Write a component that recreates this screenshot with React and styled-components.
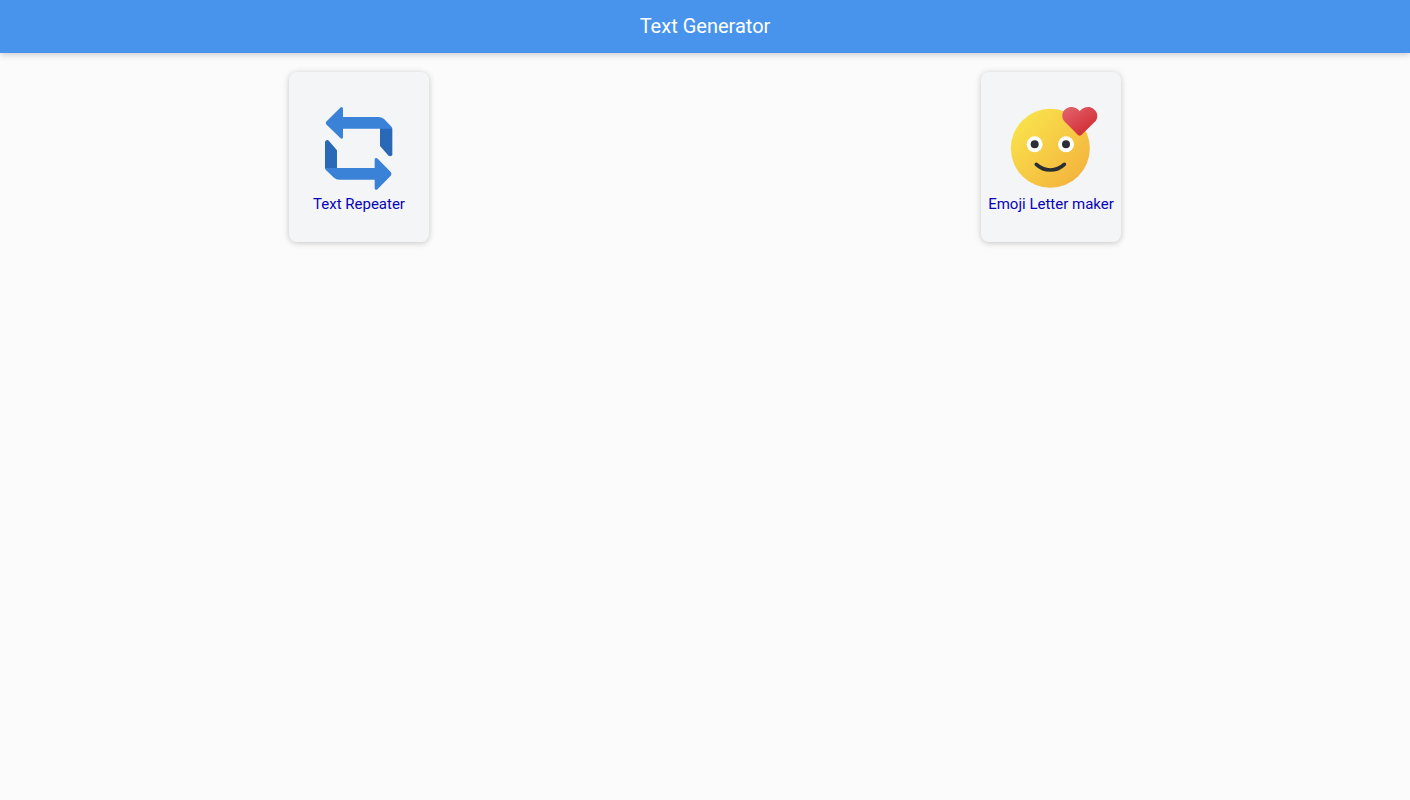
import styled, { createGlobalStyle } from "styled-components";

const GlobalStyle = createGlobalStyle`
  body {
    margin: 0;
    background-color: #fbfbfb;
    font-family: Roboto, sans-serif;
  }
`
const Header = styled.header`
  display: flex;
  justify-content: center;
  height: 53px;
  background-color: #4894ed;
  box-shadow: 0 2px 6px rgba(0, 0, 0, 0.18);
  &>h1{
    margin: 0;
    font-size: 20px;
    font-weight: 400;
    line-height: 52px;
    color: #ffffff;
  }
`
const ToolList = styled.main`
  display: flex;
  justify-content: space-around;
  padding: 19px 13px;
`
const ToolCard = styled.a`
  display: flex;
  flex-direction: column;
  align-items: center;
  justify-content: center;
  box-sizing: border-box;
  width: 140px;
  height: 170px;
  padding-bottom: 2px;
  border-radius: 8px;
  background-color: #f3f5f7;
  box-shadow: 0 1px 6px rgba(0, 0, 0, 0.22);
  text-decoration: none;
  &>svg{
    width: 96px;
    height: 96px;
  }
  &>span{
    font-size: 15px;
    line-height: 16px;
    white-space: nowrap;
    color: #0803b8;
  }
`
const RepeatIcon = () => {
  return (
    <svg viewBox="-12 0 288 288" aria-hidden="true">
      <g fill="#2a68b8" stroke="#2a68b8" strokeWidth="6" strokeLinejoin="round">
        <path d="M198 86H229V164Q226 167 223 165L198 137Z" />
        <path d="M33 204V126Q36 122 39 124L63 152V204Z" />
      </g>
      <g fill="#3a82d8" stroke="#3a82d8" strokeWidth="6" strokeLinejoin="round">
        <path d="M37 66L78 25Q81 23 81 27V54H190Q199 54 205 59L228 83H81V110Q81 115 78 112L37 72Q34 69 37 66Z" />
        <path d="M225 225L186 265Q182 268 182 264V236H73Q65 236 59 231L34 207H182V180Q182 175 186 178L225 218Q228 221 225 225Z" />
      </g>
    </svg>
  )
}
const EmojiIcon = () => {
  return (
    <svg viewBox="-6 0 288 288" aria-hidden="true">
      <defs>
        <linearGradient id="face" x1="0.15" y1="0.15" x2="0.85" y2="0.85">
          <stop offset="0" stopColor="#f9e04b" />
          <stop offset="1" stopColor="#f4b63e" />
        </linearGradient>
        <linearGradient id="heart" x1="0.1" y1="0.1" x2="0.7" y2="0.8">
          <stop offset="0" stopColor="#e25f68" />
          <stop offset="1" stopColor="#d3323a" />
        </linearGradient>
      </defs>
      <circle cx="136" cy="145" r="118.5" fill="url(#face)" />
      <g fill="#ffffff">
        <circle cx="89" cy="133" r="24" />
        <circle cx="183" cy="133" r="24" />
      </g>
      <g fill="#2b2f33">
        <circle cx="89" cy="133" r="12" />
        <circle cx="183" cy="133" r="12" />
      </g>
      <path d="M94 193Q112 210 136 210Q160 210 178 193" fill="none" stroke="#2b2f33" strokeWidth="11" strokeLinecap="round" />
      <path d="M224 34C236 20 253 18 265 26C280 36 281 56 268 67L229 105Q224 109 219 105L181 67C168 55 169 35 183 26C196 18 213 20 224 34Z" fill="url(#heart)" />
    </svg>
  )
}
const tools = [
  { name: "Text Repeater", href: "#text-repeater", Icon: RepeatIcon },
  { name: "Emoji Letter maker", href: "#emoji-letter-maker", Icon: EmojiIcon },
]
const App = () => {
  return (
    <>
      <GlobalStyle />
      <Header>
        <h1>Text Generator</h1>
      </Header>
      <ToolList>
        {tools.map(({ name, href, Icon }) => (
          <ToolCard key={name} href={href}>
            <Icon />
            <span>{name}</span>
          </ToolCard>
        ))}
      </ToolList>
    </>
  )
}
export default App;
